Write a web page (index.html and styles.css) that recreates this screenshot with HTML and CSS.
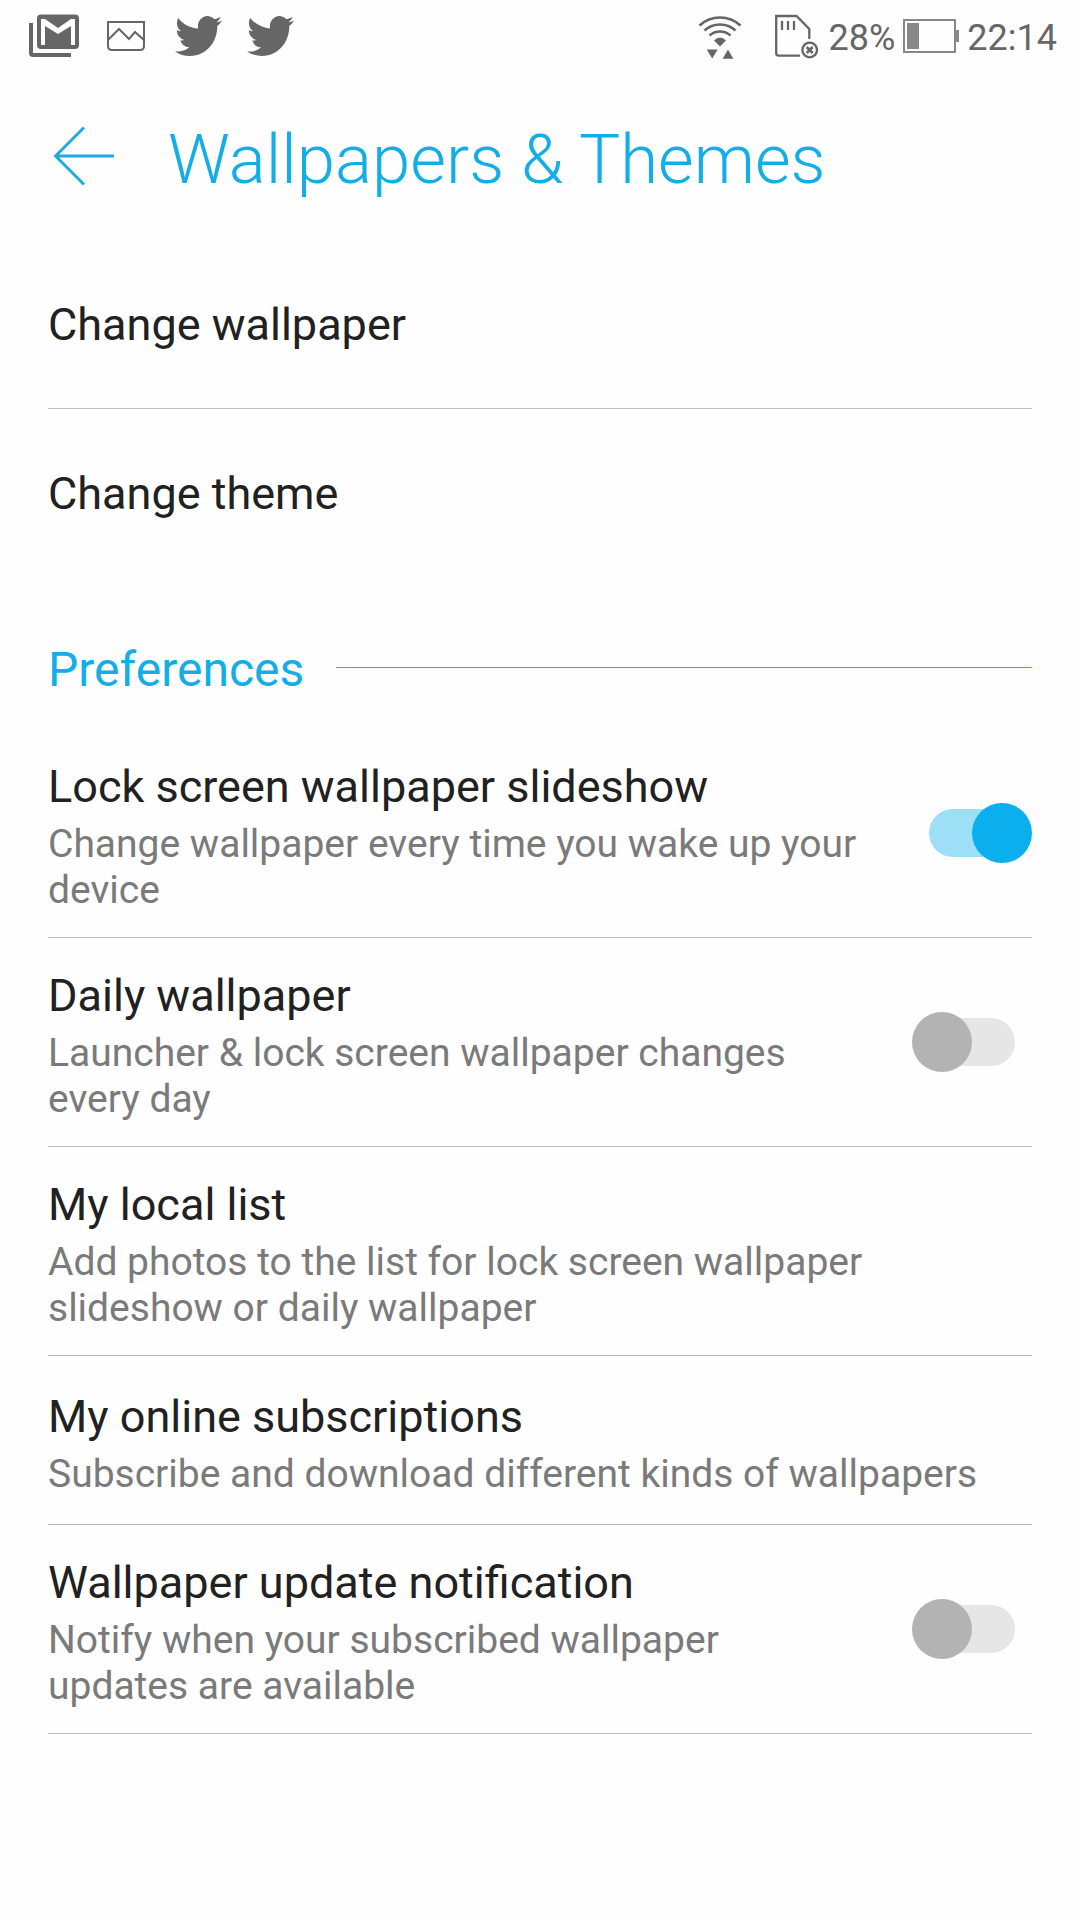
FILE: index.html
```html
<!DOCTYPE html>
<html lang="en">
<head>
  <meta charset="UTF-8" />
  <meta name="viewport" content="width=device-width, initial-scale=1.0"/>
  <title>Wallpapers &amp; Themes</title>
  <link rel="stylesheet" href="styles.css">
</head>
<body>

  <div class="status-bar">
    <div class="notifications">
      <!-- mail -->
      <svg width="72" height="72" viewBox="0 0 72 72">
        <path d="M13 23V53Q13 55 15 55H53" fill="none" stroke="#666" stroke-width="4"/>
        <rect x="19" y="14.500" width="42" height="34.500" rx="4" fill="#666"/>
        <path d="M23 45V19H27L40 28L53 19H57V45H53V26L40 34L27 26V45Z" fill="#fefefe"/>
      </svg>
      <!-- picture -->
      <svg width="72" height="72" viewBox="0 0 72 72">
        <path d="M18 22H54V46Q54 50 50 50H22Q18 50 18 46Z M18 40L29 29L39 39L45 32L54 40" fill="none" stroke="#666" stroke-width="2"/>
      </svg>
      <!-- bird -->
      <svg width="72" height="72" viewBox="0 0 72 72">
        <path id="bird" transform="translate(13 11.400) scale(1.960 2.050)" fill="#666" d="M23.953 4.57a10 10 0 01-2.825.775 4.958 4.958 0 002.163-2.723c-.951.555-2.005.959-3.127 1.184a4.92 4.92 0 00-8.384 4.482C7.69 8.095 4.067 6.13 1.64 3.162a4.822 4.822 0 00-.666 2.475c0 1.71.87 3.213 2.188 4.096a4.904 4.904 0 01-2.228-.616v.06a4.923 4.923 0 003.946 4.827 4.996 4.996 0 01-2.212.085 4.936 4.936 0 004.604 3.417 9.867 9.867 0 01-6.102 2.105c-.39 0-.779-.023-1.17-.067a13.995 13.995 0 007.557 2.209c9.053 0 13.998-7.496 13.998-13.985 0-.21 0-.42-.015-.63A9.935 9.935 0 0024 4.59z"/>
      </svg>
      <svg width="72" height="72" viewBox="0 0 72 72">
        <use href="#bird"/>
      </svg>
    </div>

    <div class="system">
      <!-- wifi -->
      <svg class="wifi" width="44" height="72" viewBox="0 0 44 72">
        <path d="M1.500 25.500A30 30 0 0 1 42.500 25.500M6.500 30.500A23 23 0 0 1 37.500 30.500M11.500 35.500A15.700 15.700 0 0 1 32.500 35.500" fill="none" stroke="#666" stroke-width="2.500"/>
        <path d="M16 40.500Q22 34.500 28 40.500L22 46.500ZM8.700 49.500H19.700L14.200 58.500ZM24.700 58.700H35.300L30 49.500Z" fill="#666"/>
      </svg>
      <!-- sd card -->
      <svg class="sd" width="44" height="72" viewBox="0 0 44 72">
        <path d="M26 55.700H5Q2.200 55.700 2.200 53V16H22.500L35.300 29V39M8 21V30M14 21V30M20 21V30" fill="none" stroke="#666" stroke-width="2.300"/>
        <circle cx="35.700" cy="50" r="7.300" fill="none" stroke="#666" stroke-width="2.300"/>
        <path d="M32.700 47L38.700 53M38.700 47L32.700 53" stroke="#666" stroke-width="2.600"/>
      </svg>
      <span>28%</span>
      <!-- battery -->
      <svg width="56" height="72" viewBox="0 0 56 72">
        <rect x="1" y="20" width="51" height="32" fill="none" stroke="#888" stroke-width="2"/>
        <path d="M4 23H16V49H4ZM53 30H56V42H53Z" fill="#888"/>
      </svg>
      <span>22:14</span>
    </div>
  </div>

  <header>
    <button class="back" aria-label="Back">
      <svg width="60" height="60" viewBox="0 0 60 60">
        <path d="M30 1.500L1.500 30L30 58.500M1.500 30H60" fill="none" stroke="#1eaae0" stroke-width="3"/>
      </svg>
    </button>
    <h1>Wallpapers &amp; Themes</h1>
  </header>

  <main>
    <a class="item simple" href="#"><span class="title">Change wallpaper</span></a>
    <a class="item simple last" href="#"><span class="title">Change theme</span></a>

    <h2>Preferences</h2>

    <label class="item">
      <span class="text">
        <span class="title">Lock screen wallpaper slideshow</span>
        <span class="summary">Change wallpaper every time you wake up your device</span>
      </span>
      <input class="switch" type="checkbox" checked>
    </label>

    <label class="item">
      <span class="text">
        <span class="title">Daily wallpaper</span>
        <span class="summary">Launcher &amp; lock screen wallpaper changes every day</span>
      </span>
      <input class="switch" type="checkbox">
    </label>

    <a class="item" href="#">
      <span class="text">
        <span class="title">My local list</span>
        <span class="summary">Add photos to the list for lock screen wallpaper slideshow or daily wallpaper</span>
      </span>
    </a>

    <a class="item" href="#">
      <span class="text">
        <span class="title">My online subscriptions</span>
        <span class="summary">Subscribe and download different kinds of wallpapers</span>
      </span>
    </a>

    <label class="item">
      <span class="text">
        <span class="title">Wallpaper update notification</span>
        <span class="summary">Notify when your subscribed wallpaper updates are available</span>
      </span>
      <input class="switch" type="checkbox">
    </label>
  </main>

</body>
</html>
```
FILE: styles.css
```css
* { box-sizing: border-box; }
body {
  margin: 0;
  font-family: Roboto, 'Liberation Sans', sans-serif;
  background: #fefefe; color: #212121;
}
svg { display: block; flex: none; }

/* status bar */
.status-bar {
  display: flex; justify-content: space-between;
  height: 72px; padding: 0 23px 0 18px;
}
.notifications { display: flex; }
.system {
  display: flex; align-items: center; gap: 8px;
  font-size: 36px; line-height: 42px; color: #666;
}
.system span { padding-top: 3px; }
.wifi { margin-right: 24px; }
.sd { margin-right: 3px; }

/* title */
header {
  display: flex; align-items: center;
  height: 168px; padding: 0 54px; gap: 54px;
}
.back {
  padding: 0; border: none; background: none; cursor: pointer;
}
h1 {
  margin: 0; padding-top: 8px;
  font-size: 69px; line-height: 80px; font-weight: 300;
  color: #13ade8;
}

/* list */
main { padding: 0 48px; }
.item {
  display: flex; align-items: center; justify-content: space-between;
  gap: 48px; min-height: 169px; padding: 24px 0;
  border-bottom: 1px solid #bdbdbd;
  color: inherit; text-decoration: none; cursor: pointer;
}
.item.last { border-bottom: none; }
.text { flex: 1; padding-top: 7px; }
.title { display: block; font-size: 45px; line-height: 53px; }
.summary {
  display: block; margin-top: 8px;
  font-size: 39px; line-height: 46px; color: #7a7a7a;
}

h2 {
  display: flex; align-items: center; gap: 32px;
  margin: 0; padding: 64px 0 31px;
  font-size: 48px; line-height: 56px; font-weight: 400;
  color: #13ade8;
}
h2::after {
  content: ''; flex: 1; height: 1px; margin-bottom: 6px;
  background: #4ba3bd;
}

/* thumb sticks out past both ends of the track */
.switch {
  appearance: none; flex: none;
  display: flex; align-items: center;
  width: 120px; height: 60px; margin: 0;
  position: relative; cursor: pointer;
}
.switch::before {
  content: ''; position: absolute; left: 17px; right: 17px;
  height: 48px; border-radius: 24px; background: #e6e6e6;
}
.switch::after {
  content: ''; position: relative;
  width: 60px; height: 60px; border-radius: 50%; background: #b3b3b3;
}
.switch:checked::before { background: #9cdff6; }
.switch:checked::after { margin-left: auto; background: #0cafed; }
```
